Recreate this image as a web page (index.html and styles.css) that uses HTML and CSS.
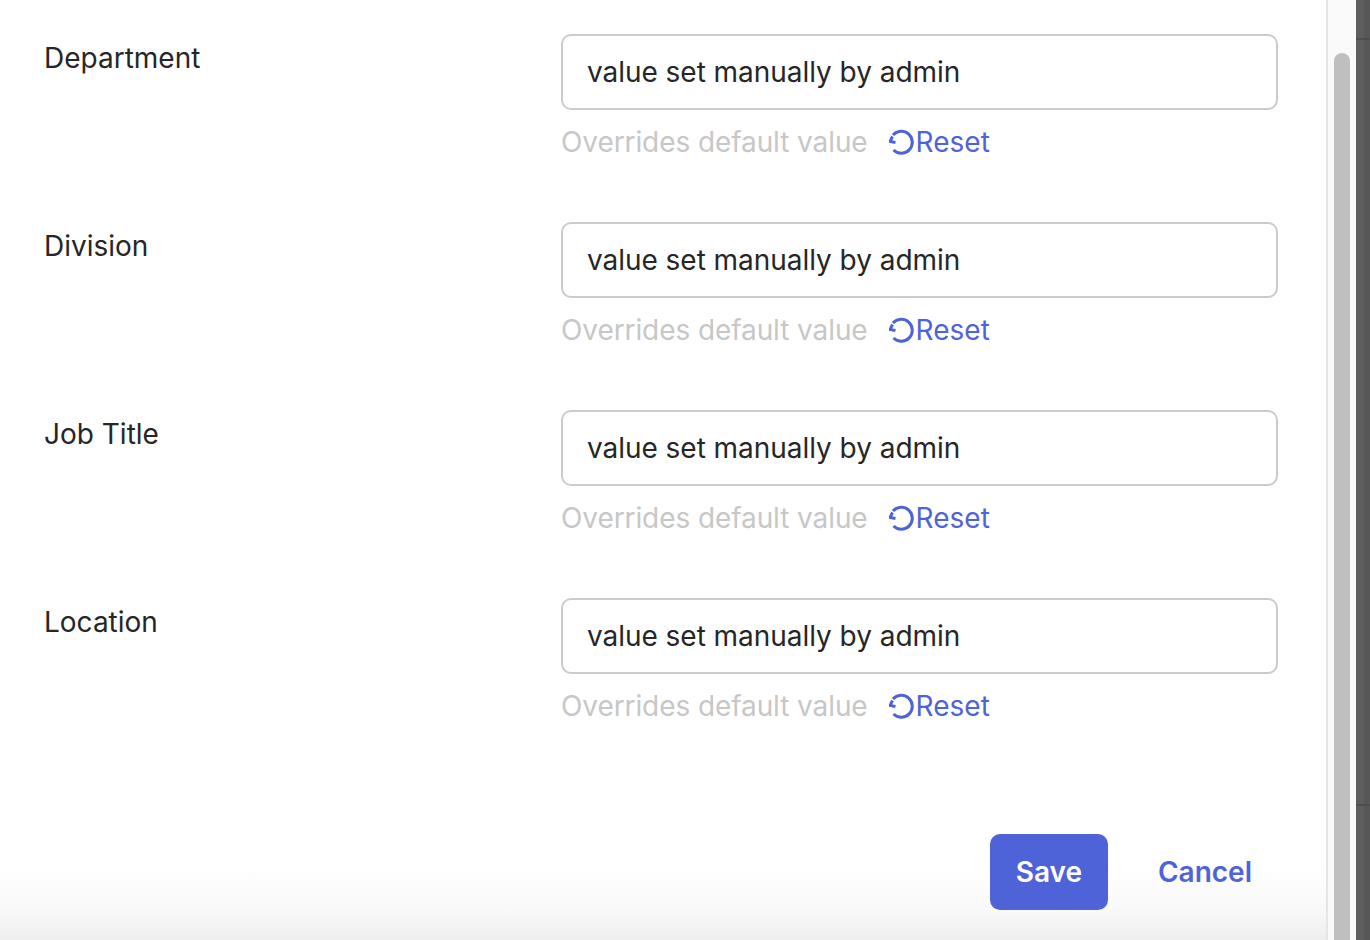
FILE: index.html
```html
<!DOCTYPE html>
<html lang="en">
<head>
    <meta charset="UTF-8">
    <title>Edit user</title>
    <link rel="stylesheet" href="styles.css">
</head>
<body>
    <div class="screen">
        <div class="panel">
            <div class="fields">
                <div class="row">
                    <div class="label">Department</div>
                    <div class="control">
                        <input class="textbox" type="text" value="value set manually by admin">
                        <div class="hint">
                            <span class="hinttext">Overrides default value</span>
                            <a class="reset" href="#">
                                <svg class="reseticon" viewBox="0 0 28 28"><path d="M4 7A11 11 0 1 1 4.5 22"/><path d="M3.5 8.5L1 13.5L6.5 14.5"/></svg>Reset
                            </a>
                        </div>
                    </div>
                </div>
                <div class="row">
                    <div class="label">Division</div>
                    <div class="control">
                        <input class="textbox" type="text" value="value set manually by admin">
                        <div class="hint">
                            <span class="hinttext">Overrides default value</span>
                            <a class="reset" href="#">
                                <svg class="reseticon" viewBox="0 0 28 28"><path d="M4 7A11 11 0 1 1 4.5 22"/><path d="M3.5 8.5L1 13.5L6.5 14.5"/></svg>Reset
                            </a>
                        </div>
                    </div>
                </div>
                <div class="row">
                    <div class="label">Job Title</div>
                    <div class="control">
                        <input class="textbox" type="text" value="value set manually by admin">
                        <div class="hint">
                            <span class="hinttext">Overrides default value</span>
                            <a class="reset" href="#">
                                <svg class="reseticon" viewBox="0 0 28 28"><path d="M4 7A11 11 0 1 1 4.5 22"/><path d="M3.5 8.5L1 13.5L6.5 14.5"/></svg>Reset
                            </a>
                        </div>
                    </div>
                </div>
                <div class="row">
                    <div class="label">Location</div>
                    <div class="control">
                        <input class="textbox" type="text" value="value set manually by admin">
                        <div class="hint">
                            <span class="hinttext">Overrides default value</span>
                            <a class="reset" href="#">
                                <svg class="reseticon" viewBox="0 0 28 28"><path d="M4 7A11 11 0 1 1 4.5 22"/><path d="M3.5 8.5L1 13.5L6.5 14.5"/></svg>Reset
                            </a>
                        </div>
                    </div>
                </div>
            </div>
            <div class="footer">
                <button class="savebtn" type="button">Save</button>
                <a class="cancel" href="#">Cancel</a>
            </div>
        </div>
        <div class="scrolltrack">
            <div class="scrollthumb"></div>
        </div>
        <div class="backdrop">
            <div class="backline1"></div>
            <div class="backline2"></div>
        </div>
    </div>
</body>
</html>
```
FILE: styles.css
```css
body{
    margin: 0;
    font-family: "Inter", "Liberation Sans", sans-serif;
    color: #262626;
}

.screen{
    display: flex;
    width: 1370px;
    height: 940px;
    overflow: hidden;
}

.panel{
    width: 1326px;
    height: 940px;
    background-color: #ffffff;
    display: flex;
    flex-direction: column;
}

.fields{
    padding-top: 34px;
    height: 726px;
}

.row{
    display: flex;
    height: 188px;
}

.label{
    width: 517px;
    margin-left: 44px;
    font-size: 28px;
    line-height: 48px;
}

.control{
    width: 717px;
}

.textbox{
    display: block;
    box-sizing: border-box;
    width: 717px;
    height: 76px;
    padding: 0 24px;
    border: 2px solid #cccccc;
    border-radius: 10px;
    background-color: #ffffff;
    font-family: "Inter", "Liberation Sans", sans-serif;
    font-size: 28px;
    letter-spacing: -0.04px;
    color: #262626;
    outline: none;
}

.hint{
    display: flex;
    align-items: center;
    height: 48px;
    margin-top: 8px;
    font-size: 28px;
}

.hinttext{
    color: #c7c7c7;
    letter-spacing: -0.09px;
}

.reset{
    display: flex;
    align-items: center;
    margin-left: 21px;
    color: #4f63d9;
    text-decoration: none;
}

.reseticon{
    width: 28px;
    height: 28px;
    margin-right: -1px;
    fill: none;
    stroke: #4f63d9;
    stroke-width: 3;
}

.footer{
    display: flex;
    align-items: flex-start;
    justify-content: flex-end;
    box-sizing: border-box;
    height: 180px;
    padding: 74px 74px 0 0;
    background: linear-gradient(to bottom, #ffffff 0, #ffffff 105px, #f9f9f9 150px, #eeeeee 180px);
}

.savebtn{
    width: 118px;
    height: 76px;
    border: none;
    border-radius: 10px;
    background-color: #4f63d9;
    color: #ffffff;
    font-family: "Inter", "Liberation Sans", sans-serif;
    font-size: 28px;
    font-weight: 600;
}

.cancel{
    margin-left: 50px;
    line-height: 76px;
    font-size: 28px;
    font-weight: 600;
    color: #4f63d9;
    text-decoration: none;
}

.scrolltrack{
    box-sizing: border-box;
    width: 30px;
    height: 940px;
    padding: 53px 6px 0 6px;
    background-color: #fafafa;
    border-left: 2px solid #e6e6e6;
}

.scrollthumb{
    width: 16px;
    height: 887px;
    background-color: #bfbfbf;
    border-radius: 8px 8px 0 0;
}

.backdrop{
    width: 14px;
    height: 940px;
    background: linear-gradient(to right, #5e5e5e 8px, #575757 8px);
    overflow: hidden;
}

.backline1{
    height: 2px;
    margin-top: 38px;
    background-color: #4e4e4e;
}

.backline2{
    height: 2px;
    margin-top: 764px;
    background-color: #4e4e4e;
}
```
